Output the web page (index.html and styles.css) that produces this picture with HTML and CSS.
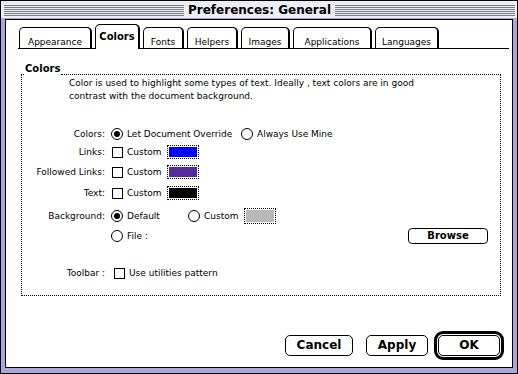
FILE: index.html
```html
<!DOCTYPE html>
<html>
<head>
<meta charset="utf-8">
<link rel="stylesheet" href="styles.css">
</head>
<body>
<div class="window">
  <div class="titlebar">
    <div class="stripes"></div>
    <div class="title">Preferences: General</div>
    <div class="stripes"></div>
  </div>
  <div class="pane">
    <div class="tabs">
      <div class="tab t-appearance">Appearance</div>
      <div class="tab tab-active t-colors">Colors</div>
      <div class="tab t-fonts">Fonts</div>
      <div class="tab t-helpers">Helpers</div>
      <div class="tab t-images">Images</div>
      <div class="tab t-apps">Applications</div>
      <div class="tab t-langs">Languages</div>
    </div>

    <div class="group">
      <div class="group-head">
        <span class="gh-corner"></span>
        <span class="gh-label">Colors</span>
        <span class="gh-line"></span>
      </div>
      <div class="group-body">
        <p class="desc">Color is used to highlight some types of text. Ideally , text colors are in good<br>contrast with the document background.</p>

        <div class="row r-colors">
          <span class="lbl">Colors:</span>
          <div class="ctrls">
            <span class="opt opt-w130"><span class="radio on"></span>Let Document Override</span>
            <span class="opt"><span class="radio"></span>Always Use Mine</span>
          </div>
        </div>
        <div class="row r-links">
          <span class="lbl">Links:</span>
          <div class="ctrls">
            <span class="opt opt-w56"><span class="check"></span>Custom</span>
            <span class="swatch"><span class="fill sw-blue"></span></span>
          </div>
        </div>
        <div class="row r-followed">
          <span class="lbl">Followed Links:</span>
          <div class="ctrls">
            <span class="opt opt-w56"><span class="check"></span>Custom</span>
            <span class="swatch"><span class="fill sw-purple"></span></span>
          </div>
        </div>
        <div class="row r-text">
          <span class="lbl">Text:</span>
          <div class="ctrls">
            <span class="opt opt-w56"><span class="check"></span>Custom</span>
            <span class="swatch"><span class="fill sw-black"></span></span>
          </div>
        </div>
        <div class="row r-bg">
          <span class="lbl">Background:</span>
          <div class="ctrls">
            <span class="opt opt-w77"><span class="radio on"></span>Default</span>
            <span class="opt opt-w56"><span class="radio"></span>Custom</span>
            <span class="swatch swatch-tall"><span class="fill sw-gray"></span></span>
          </div>
        </div>
        <div class="row r-file">
          <span class="lbl"></span>
          <div class="ctrls">
            <span class="opt"><span class="radio"></span>File :</span>
            <button class="btn btn-browse">Browse</button>
          </div>
        </div>
        <div class="row r-toolbar">
          <span class="lbl">Toolbar :</span>
          <div class="ctrls ctrls-shift">
            <span class="opt"><span class="check"></span>Use utilities pattern</span>
          </div>
        </div>
      </div>
    </div>

    <div class="buttons">
      <button class="btn btn-big btn-cancel">Cancel</button>
      <button class="btn btn-big btn-apply">Apply</button>
      <span class="default-ring"><button class="btn btn-big btn-ok">OK</button></span>
    </div>
  </div>
</div>
</body>
</html>
```

FILE: styles.css
```css
* { box-sizing: border-box; }

html, body {
  margin: 0;
  padding: 0;
  background: #fff;
}

body {
  width: 518px;
  height: 374px;
  font-family: "DejaVu Sans", sans-serif;
  font-size: 9px;
  color: #000;
}

.window {
  width: 518px;
  height: 374px;
  border: 1px solid #000;
  background: #a9a9d9;
  display: flex;
  flex-direction: column;
}

.titlebar {
  height: 17px;
  background: #ededf8;
  display: flex;
  align-items: flex-start;
  padding: 0 2px 0 3px;
  margin-bottom: 1px;
}

.stripes {
  flex: 1;
  height: 12px;
  margin-top: 3px;
  background: repeating-linear-gradient(to bottom, #ededf8 0 1px, #7c7c84 1px 2px);
}

.title {
  padding: 0 4px;
  font-family: "DejaVu Sans", sans-serif;
  font-weight: bold;
  font-size: 12px;
  line-height: 17px;
  padding-top: 1px;
  white-space: nowrap;
}

.pane {
  margin: 0 4px 5px 4px;
  height: 349px;
  border: 1px solid #000;
  background: #fff;
  display: flex;
  flex-direction: column;
}

/* Tabs */
.tabs {
  display: flex;
  align-items: flex-end;
  gap: 3px;
  height: 25px;
  margin: 4px 3px 0 12px;
  padding-left: 1px;
  border-bottom: 1px solid #000;
}

.tab {
  height: 21px;
  border: 1px solid #000;
  border-right-width: 2px;
  border-bottom: none;
  border-radius: 5px 5px 0 0;
  background: #fff;
  text-align: center;
  font-size: 9px;
  line-height: 11px;
  padding-top: 9px;
  white-space: nowrap;
}

.tab-active {
  height: 25px;
  margin-bottom: -1px;
  padding-top: 6px;
  font-weight: bold;
  font-size: 10px;
  position: relative;
}

.t-appearance { width: 73px; }
.t-colors { width: 45px; }
.t-fonts { width: 41px; }
.t-helpers { width: 51px; }
.t-images { width: 49px; }
.t-apps { width: 79px; }
.t-langs { width: 64px; }

/* Group box */
.group {
  margin: 16px 0 0 15px;
  width: 480px;
}

.group-head {
  display: flex;
  align-items: flex-end;
  height: 10px;
}

.gh-corner {
  width: 3px;
  border-bottom: 1px dotted #000;
}

.gh-label {
  font-weight: bold;
  font-size: 10px;
  line-height: 10px;
  height: 11px;
  padding: 0 1px;
}

.gh-line {
  flex: 1;
  border-bottom: 1px dotted #000;
}

.group-body {
  height: 221px;
  border: 1px dotted #000;
  border-top: none;
  padding-top: 2px;
}

.desc {
  margin: 0;
  padding-left: 47px;
  font-size: 9px;
  line-height: 13px;
  white-space: nowrap;
}

.row {
  display: grid;
  grid-template-columns: 83px 1fr;
  column-gap: 6px;
  height: 18px;
  align-items: center;
}

.r-colors { margin-top: 22px; }
.r-links { margin-top: 0; }
.r-followed { margin-top: 2px; }
.r-text { margin-top: 3px; }
.r-bg { margin-top: 5px; }
.r-file { margin-top: 2px; }
.r-toolbar { margin-top: 19px; }

.lbl {
  text-align: right;
  white-space: nowrap;
}

.ctrls {
  display: flex;
  align-items: center;
  white-space: nowrap;
}

.ctrls-shift { padding-left: 2px; }

.opt {
  display: inline-flex;
  align-items: center;
  gap: 4px;
}

.opt-w130 { width: 130px; }
.opt-w56 { width: 56px; }
.opt-w77 { width: 77px; }

.radio {
  width: 12px;
  height: 12px;
  border: 1px solid #000;
  border-radius: 50%;
  display: inline-flex;
  align-items: center;
  justify-content: center;
  flex: none;
}

.radio.on::after {
  content: "";
  width: 6px;
  height: 6px;
  border-radius: 50%;
  background: #000;
}

.check {
  width: 11px;
  height: 11px;
  border: 1px solid #000;
  flex: none;
  margin-left: 1px;
}

.swatch {
  width: 32px;
  height: 14px;
  border: 1px dotted #000;
  padding: 1px;
  display: inline-flex;
}

.swatch-tall { height: 16px; }

.fill { flex: 1; }
.sw-blue { background: #0000ff; }
.sw-purple { background: #552a9c; }
.sw-black { background: #000; }
.sw-gray { background: #b9b9b9; }

/* Buttons */
.btn {
  font-family: "DejaVu Sans", sans-serif;
  font-weight: bold;
  background: #fff;
  color: #000;
  border: 1px solid #000;
  border-radius: 4px;
  padding: 0;
  margin: 0;
}

.btn-browse {
  margin-left: auto;
  margin-right: 12px;
  width: 80px;
  height: 16px;
  font-size: 10px;
  line-height: 14px;
}

.buttons {
  margin-top: auto;
  margin-bottom: 7px;
  margin-right: 8px;
  display: flex;
  justify-content: flex-end;
  align-items: center;
}

.btn-big {
  height: 21px;
  font-size: 12px;
  line-height: 19px;
  border-radius: 5px;
}

.btn-cancel { width: 68px; margin-right: 13px; }
.btn-apply { width: 62px; margin-right: 6px; }
.btn-ok { width: 62px; display: block; }

.default-ring {
  display: block;
  border: 3px solid #000;
  border-radius: 9px;
  padding: 1px;
}
```
